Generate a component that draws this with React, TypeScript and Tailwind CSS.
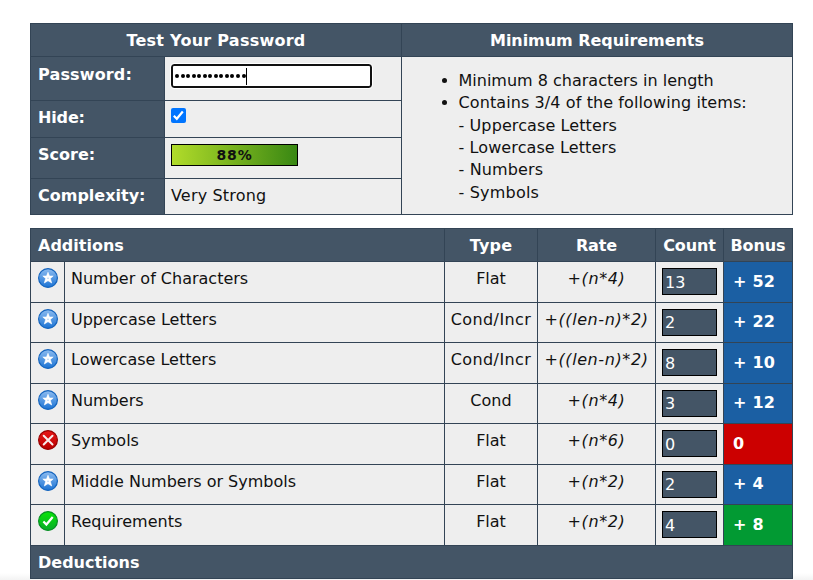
import { useId } from "react";

type Status = "star" | "fail" | "pass";

interface Row {
  status: Status;
  name: string;
  type: string;
  rate: string;
  count: string;
  bonus: string;
  short: boolean;
}

const rows: Row[] = [
  { status: "star", name: "Number of Characters", type: "Flat", rate: "+(n*4)", count: "13", bonus: "+ 52", short: false },
  { status: "star", name: "Uppercase Letters", type: "Cond/Incr", rate: "+((len-n)*2)", count: "2", bonus: "+ 22", short: true },
  { status: "star", name: "Lowercase Letters", type: "Cond/Incr", rate: "+((len-n)*2)", count: "8", bonus: "+ 10", short: false },
  { status: "star", name: "Numbers", type: "Cond", rate: "+(n*4)", count: "3", bonus: "+ 12", short: true },
  { status: "fail", name: "Symbols", type: "Flat", rate: "+(n*6)", count: "0", bonus: "0", short: false },
  { status: "star", name: "Middle Numbers or Symbols", type: "Flat", rate: "+(n*2)", count: "2", bonus: "+ 4", short: true },
  { status: "pass", name: "Requirements", type: "Flat", rate: "+(n*2)", count: "4", bonus: "+ 8", short: false },
];

const bonusColor: Record<Status, string> = {
  star: "bg-[#1b5fa3]",
  fail: "bg-[#cc0000]",
  pass: "bg-[#029a33]",
};

const iconColors: Record<Status, [string, string, string]> = {
  star: ["#8dbcf0", "#1b73d4", "#1464bd"],
  fail: ["#e81818", "#b80000", "#960000"],
  pass: ["#08e408", "#08ac28", "#078d24"],
};

function StatusIcon({ status }: { status: Status }) {
  const id = useId();
  const [top, bottom, rim] = iconColors[status];
  return (
    <svg width="20" height="20" viewBox="0 0 20 20" className="block">
      <defs>
        <linearGradient id={id} x1="0" y1="0" x2="0" y2="1">
          <stop offset="0" stopColor={top} />
          <stop offset="1" stopColor={bottom} />
        </linearGradient>
      </defs>
      <circle cx="10" cy="10" r="9.4" fill={`url(#${id})`} stroke={rim} strokeWidth="1.2" />
      {status === "star" && (
        <>
          <path d="M10 4.3 11.5 8h3.7l-2.8 2.6 1.3 4.4L10 12.7l-3.7 2.3 1.3-4.4L4.8 8h3.7Z" fill="#fff" stroke="#fff" strokeWidth=".6" strokeLinejoin="round" />
          <circle cx="10" cy="10.2" r=".8" fill="#a9cdf3" />
        </>
      )}
      {status === "fail" && <path d="m5.7 5.7 8.8 8.8m0-8.8-8.8 8.8" stroke="#f7eded" strokeWidth="2" strokeLinecap="round" />}
      {status === "pass" && <path d="m5.4 10.4 3 3.1 6.3-7.5" fill="none" stroke="#fff" strokeWidth="2.2" />}
    </svg>
  );
}

const head = "bg-[#445566] font-bold text-white";
const line = "border-[#334455]";

export default function App() {
  const fields = [
    { label: "Password:", height: "h-[44px]", text: "pt-[7px] tracking-[0.15px]" },
    { label: "Hide:", height: "h-[37px]", text: "pt-[6px] tracking-[-0.15px]" },
    { label: "Score:", height: "h-[41px]", text: "pt-[6px]" },
    { label: "Complexity:", height: "h-[36px]", text: "pt-[6px]" },
  ];
  return (
    <div className="flex h-[580px] w-[813px] flex-col overflow-hidden bg-[linear-gradient(to_top,#f3f3f3,#ffffff_7px)] pt-[23px] font-['DejaVu_Sans',Verdana,sans-serif] text-[16px] leading-[22px] text-[#111]">
      <section className={`ml-[30px] grid w-[763px] shrink-0 grid-cols-[371px_391px] border-t border-l ${line}`}>
        <h2 className={`${head} ${line} h-[33px] border-r border-b pt-[6px] text-center tracking-[0.25px]`}>Test Your Password</h2>
        <h2 className={`${head} ${line} h-[33px] border-r border-b pt-[6px] text-center tracking-[-0.05px]`}>Minimum Requirements</h2>
        <div>
          {fields.map((f, i) => (
            <div key={f.label} className={`grid grid-cols-[134px_237px] ${f.height}`}>
              <div className={`${head} ${line} border-r border-b pl-[7px] ${f.text}`}>{f.label}</div>
              <div className={`${line} border-r border-b bg-[#eee] pt-[6px] pl-[6px]`}>
                {i === 0 && (
                  <div className="mt-px flex h-[24px] w-[201px] items-center rounded-[3px] border-2 border-[#111] bg-white pl-[2px] outline outline-white">
                    <div className="mb-px flex gap-[1.55px]">
                      {Array.from({ length: 13 }, (_, n) => (
                        <span key={n} className="size-[4px] rounded-full bg-black" />
                      ))}
                    </div>
                    <span className="h-[17px] w-px bg-black" />
                  </div>
                )}
                {i === 1 && (
                  <svg viewBox="0 0 15 15" className="mt-px size-[15px]">
                    <rect width="15" height="15" rx="2" fill="#0075ff" />
                    <path d="m2.8 7.8 3 3 6-7.3" fill="none" stroke="#fff" strokeWidth="2.2" />
                  </svg>
                )}
                {i === 2 && (
                  <div className="h-[22px] w-[127px] border border-black bg-linear-to-r from-[#b1dc2a] to-[#388813] text-center text-[14px] leading-[20px] font-bold tracking-[0.9px]">88%</div>
                )}
                {i === 3 && <span className="tracking-[0.17px]">Very Strong</span>}
              </div>
            </div>
          ))}
        </div>
        <ul className={`${line} list-disc border-r border-b bg-[#eee] pt-[12.7px] pl-[56.5px] leading-[22.4px] whitespace-nowrap`}>
          <li>Minimum 8 characters in length</li>
          <li>
            <span className="tracking-[0.1px]">Contains 3/4 of the following items:</span>
            <br /><span className="tracking-[0.1px]">- Uppercase Letters</span>
            <br /><span className="tracking-[0.1px]">- Lowercase Letters</span>
            <br /><span className="tracking-[0.15px]">- Numbers</span>
            <br /><span className="tracking-[0.2px]">- Symbols</span>
          </li>
        </ul>
      </section>

      <section className={`mt-[13px] ml-[30px] w-[763px] shrink-0 border-t border-l ${line}`}>
        <div className={`${head} grid h-[33px] grid-cols-[414px_93px_118px_68px_69px] text-center *:border-r *:border-b *:border-[#334455] *:pt-[6px]`}>
          <div className="pl-[7px] text-left">Additions</div>
          <div className="tracking-[0.2px]">Type</div>
          <div className="tracking-[-0.1px]">Rate</div>
          <div className="tracking-[-0.1px]">Count</div>
          <div className="tracking-[-0.1px]">Bonus</div>
        </div>
        {rows.map((r) => (
          <div
            key={r.name}
            className={`grid grid-cols-[34px_380px_93px_118px_68px_69px] bg-[#eee] text-center *:border-r *:border-b *:border-[#334455] *:pt-[6px] ${r.short ? "h-[40px]" : "h-[41px]"}`}
          >
            <div className="pl-[7px]"><StatusIcon status={r.status} /></div>
            <div className="pl-[6px] text-left">{r.name}</div>
            <div className={r.type === "Cond/Incr" ? "tracking-[0.4px]" : ""}>{r.type}</div>
            <div className="tracking-[0.6px] italic">{r.rate}</div>
            <div className="pl-[6px]">
              <div className={`h-[27px] w-[55px] border border-black bg-[#445566] pl-[2px] text-left text-white ${r.short ? "leading-[25px]" : "leading-[27px]"}`}>{r.count}</div>
            </div>
            <div className={`${bonusColor[r.status]} pl-[9px] text-left font-bold tracking-[0.2px] text-white ${r.short ? "leading-[26px]" : "leading-[28px]"}`}>{r.bonus}</div>
          </div>
        ))}
        <div className={`${head} ${line} h-[33px] border-r border-b pt-[6px] pl-[7px]`}>Deductions</div>
      </section>
    </div>
  );
}
